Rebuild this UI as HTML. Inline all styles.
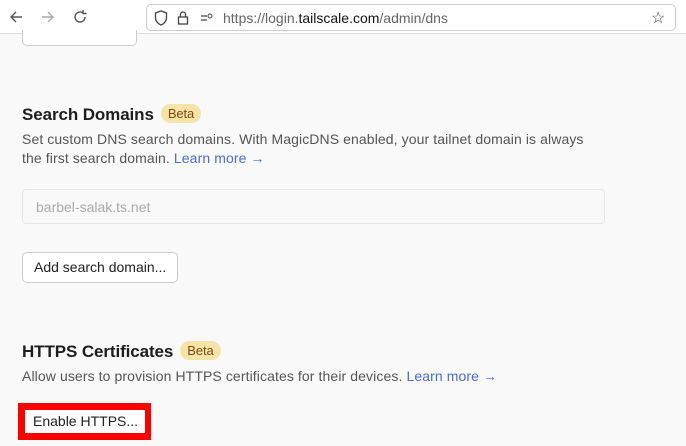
<!DOCTYPE html>
<html><head><meta charset="utf-8"><style>
*{margin:0;padding:0;box-sizing:border-box}
body{width:686px;height:446px;overflow:hidden;background:#f9f9f9;font-family:"Liberation Sans",sans-serif;position:relative;color:#222}
.bar{position:absolute;left:0;top:0;width:686px;height:34px;background:#fff;border-bottom:1px solid #ddd}
.url{position:absolute;left:146px;top:4px;width:530px;height:27px;border:1px solid #ccc;border-radius:5px;background:#fff}
.ab{position:absolute}
h2{position:absolute;font-size:17px;font-weight:bold;color:#1f1e1e;letter-spacing:-0.1px}
.beta{display:inline-block;background:#f6e3a8;color:#7a4a12;font-size:13px;font-weight:normal;border-radius:10px;padding:2px 7px;margin-left:7px;vertical-align:2px}
p{position:absolute;font-size:14px;color:#555;line-height:19px;letter-spacing:0.1px}
a{color:#4b6bd6;text-decoration:none}
.btn{position:absolute;background:#fff;border:1px solid #ccc;border-radius:5px;font-size:14px;color:#222;padding:0 11px}
</style></head><body>
<div class="bar">
<svg class="ab" style="left:8px;top:9px" width="16" height="16" viewBox="0 0 16 16"><path d="M14 8H3M8 3L3 8l5 5" stroke="#555" stroke-width="1.4" fill="none"/></svg>
<svg class="ab" style="left:40px;top:9px" width="16" height="16" viewBox="0 0 16 16"><path d="M2 8h11M8 3l5 5-5 5" stroke="#aaa" stroke-width="1.4" fill="none"/></svg>
<svg class="ab" style="left:72px;top:9px" width="16" height="16" viewBox="0 0 16 16"><path d="M13 8a5 5 0 1 1-2-4M11 1v3.5h3.5" stroke="#555" stroke-width="1.4" fill="none"/></svg>
<div class="url">
<svg class="ab" style="left:7px;top:5px" width="14" height="16" viewBox="0 0 14 16"><path d="M7 1L1.5 3v5c0 3.5 3 6 5.5 7 2.5-1 5.5-3.5 5.5-7V3z" stroke="#444" stroke-width="1.3" fill="none"/></svg>
<svg class="ab" style="left:30px;top:5px" width="12" height="16" viewBox="0 0 12 16"><rect x="1.5" y="7" width="9" height="7" stroke="#444" stroke-width="1.3" fill="none"/><path d="M3.5 7V4.5a2.5 2.5 0 0 1 5 0V7" stroke="#444" stroke-width="1.3" fill="none"/></svg>
<svg class="ab" style="left:53px;top:7px" width="14" height="12" viewBox="0 0 14 12"><path d="M1 4h6M1 8h6" stroke="#444" stroke-width="1.3"/><circle cx="10" cy="4" r="2" stroke="#444" fill="none"/></svg>
<div class="ab" style="left:76px;top:5px;font-size:14px;color:#666">https://login.<span style="color:#111">tailscale.com</span>/admin/dns</div>
<div class="ab" style="left:504px;top:3px;font-size:16px;color:#444">☆</div>
</div>
</div>
<div class="btn" style="left:22px;top:30px;width:115px;height:16px;border-top:none;border-radius:0 0 5px 5px"></div>
<h2 style="left:22px;top:104px">Search Domains<span class="beta">Beta</span></h2>
<p style="left:22px;top:130px;width:575px">Set custom DNS search domains. With MagicDNS enabled, your tailnet domain is always the first search domain. <a>Learn more →</a></p>
<div class="ab" style="left:22px;top:189px;width:583px;height:35px;border:1px solid #e6e6e6;border-radius:4px;background:#f9f9f9;font-size:14px;color:#aaa;padding:9px 13px">barbel-salak.ts.net</div>
<div class="btn" style="left:22px;top:252px;height:31px;line-height:29px">Add search domain...</div>
<h2 style="left:22px;top:341px">HTTPS Certificates<span class="beta">Beta</span></h2>
<p style="left:22px;top:367px">Allow users to provision HTTPS certificates for their devices. <a>Learn more →</a></p>
<div class="ab" style="left:18px;top:403px;width:133px;height:37px;background:#f00"></div>
<div class="ab" style="left:25px;top:410px;width:120px;height:23px;background:#fff;font-size:14px;line-height:23px;padding-left:8px;color:#222">Enable HTTPS...</div>
</body></html>
